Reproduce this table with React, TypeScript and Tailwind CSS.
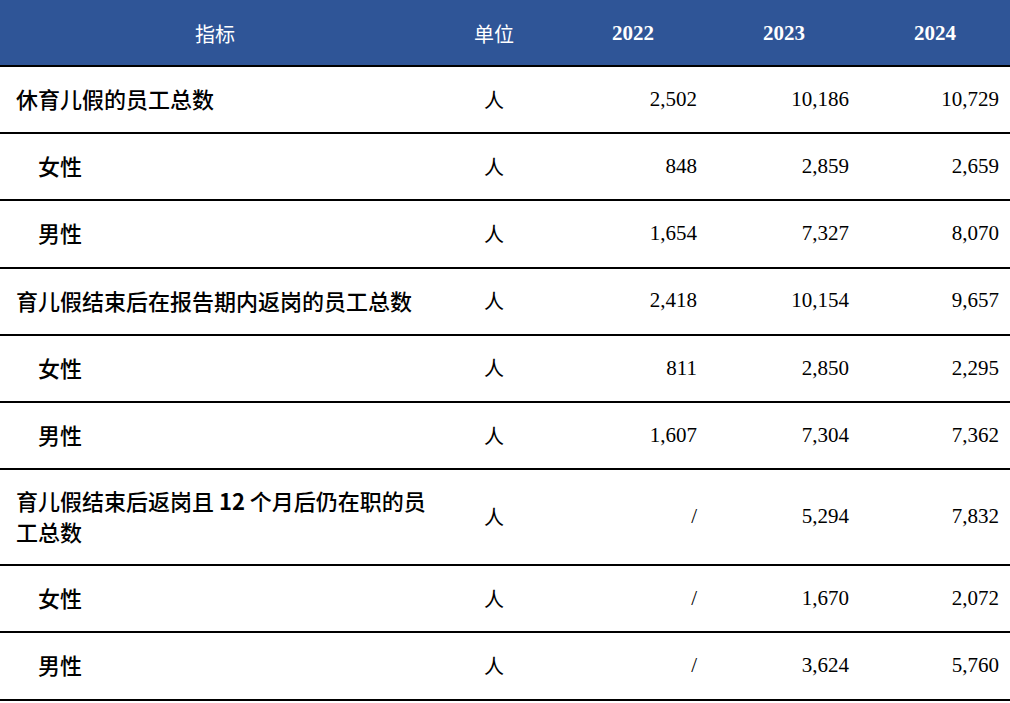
const rows: { label: React.ReactNode; sub?: boolean; tall?: boolean; v: string[] }[] = [
  { label: '休育儿假的员工总数', v: ['2,502', '10,186', '10,729'] },
  { label: '女性', sub: true, v: ['848', '2,859', '2,659'] },
  { label: '男性', sub: true, v: ['1,654', '7,327', '8,070'] },
  { label: '育儿假结束后在报告期内返岗的员工总数', v: ['2,418', '10,154', '9,657'] },
  { label: '女性', sub: true, v: ['811', '2,850', '2,295'] },
  { label: '男性', sub: true, v: ['1,607', '7,304', '7,362'] },
  {
    label: (
      <>
        育儿假结束后返岗且 <span className="font-bold">12</span> 个月后仍在职的员工总数
      </>
    ),
    tall: true,
    v: ['/', '5,294', '7,832'],
  },
  { label: '女性', sub: true, v: ['/', '1,670', '2,072'] },
  { label: '男性', sub: true, v: ['/', '3,624', '5,760'] },
];

const cjk = "font-['Noto_Sans_CJK_SC',sans-serif]";
const serif = "font-['Liberation_Serif','Noto_Sans_CJK_SC',serif]";

export default function App() {
  return (
    <div className="w-[1010px] bg-white text-black">
      <table className="w-full border-collapse table-fixed">
        <colgroup>
          <col className="w-[430px]" />
          <col className="w-[128px]" />
          <col className="w-[150px]" />
          <col className="w-[152px]" />
          <col className="w-[150px]" />
        </colgroup>
        <thead>
          <tr className="bg-[#2f5597] text-white h-[66px] border-b-2 border-black">
            <th className={`${cjk} font-normal text-[20px] text-center pt-[3px]`}>指标</th>
            <th className={`${cjk} font-normal text-[20px] text-center pt-[3px]`}>单位</th>
            <th className={`${serif} font-bold text-[21px] text-center pt-[3px]`}>2022</th>
            <th className={`${serif} font-bold text-[21px] text-center pt-[3px]`}>2023</th>
            <th className={`${serif} font-bold text-[21px] text-center pt-[3px]`}>2024</th>
          </tr>
        </thead>
        <tbody>
          {rows.map((r, i) => (
            <tr key={i} className={`border-b-2 border-black ${r.tall ? 'h-[96px]' : 'h-[67.2px]'}`}>
              <td
                className={`${serif} font-medium text-[22px] leading-[28px] ${r.sub ? 'pl-[38px]' : 'pl-[16px]'} pr-[2px]`}
              >
                <span className={cjk}>{r.label}</span>
              </td>
              <td className={`${cjk} text-[20px] text-center`}>人</td>
              {r.v.map((x, j) => (
                <td key={j} className={`${serif} text-[21px] text-right pr-[11px]`}>
                  {x}
                </td>
              ))}
            </tr>
          ))}
        </tbody>
      </table>
    </div>
  );
}
